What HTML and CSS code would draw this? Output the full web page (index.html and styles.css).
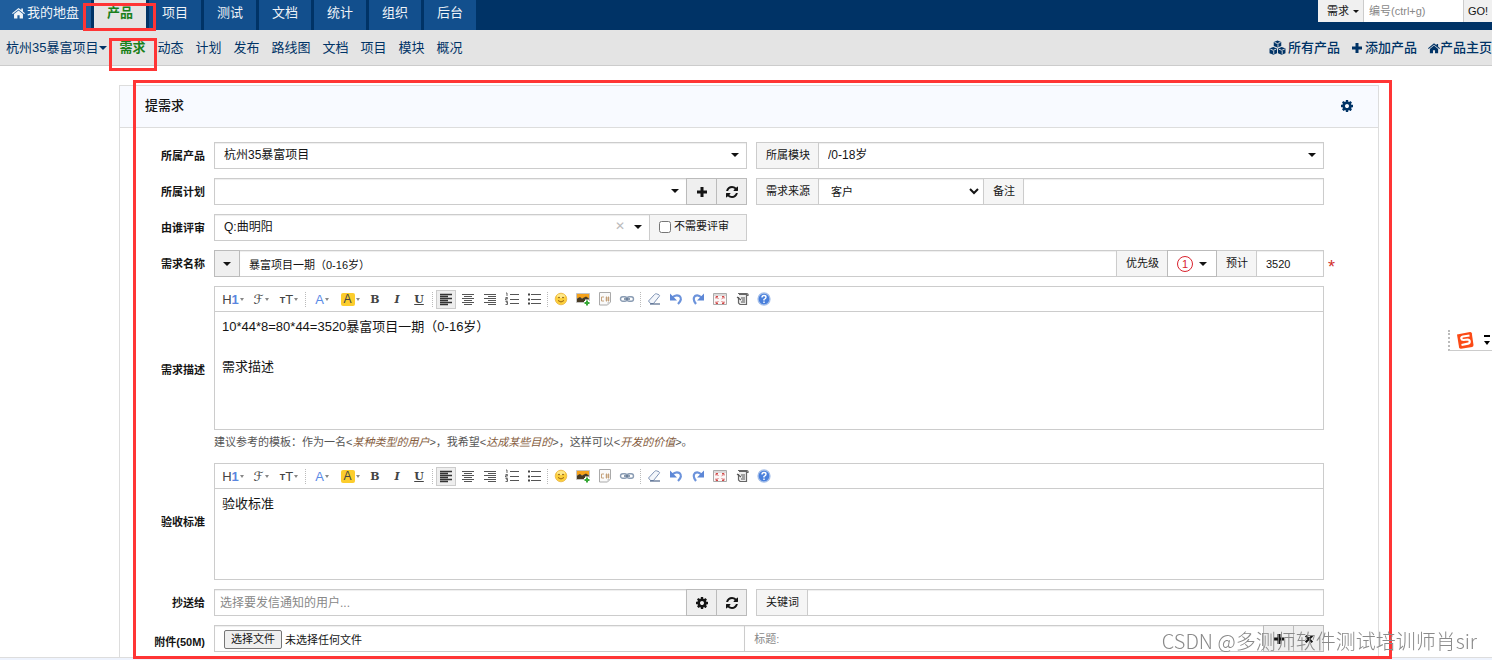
FILE: index.html
```html
<!DOCTYPE html>
<html lang="zh-CN">
<head>
<meta charset="utf-8">
<title>提需求</title>
<link rel="stylesheet" href="styles.css">
</head>
<body>
<svg class="sprite" aria-hidden="true">
  <symbol id="i-home" viewBox="0 0 14 12"><path fill="currentColor" d="M7 .5 0 6.300l.8.9L7 2.200l6.200 5 .8-.9-2.200-1.800V1.200H10v1.700zM7 3.200 2.200 7.100V12h3.600V8.500h2.400V12h3.600V7.100z"/></symbol>
  <symbol id="i-plus" viewBox="0 0 12 12"><path fill="currentColor" d="M4.500 1h3v3.500H11v3H7.500V11h-3V7.500H1v-3h3.500z"/></symbol>
  <symbol id="i-times" viewBox="0 0 12 12"><path fill="none" stroke="currentColor" stroke-width="2.600" d="m2 2 8 8M10 2l-8 8"/></symbol>
  <symbol id="i-cubes" viewBox="0 0 18 16"><path fill="currentColor" d="M9 .5 13 2v4.500L9 8 5 6.500V2zM4.500 7.500l4 1.500v5l-4 1.700-4-1.700V9zM13.500 7.500l4 1.500v5l-4 1.700-4-1.700V9z"/><path fill="none" stroke="#e4e4e4" d="m5.800 2.500 3.200 1.300 3.200-1.300M9.500 4.500v2.700M1.300 9.700l3.200 1.300 3.200-1.300M5 11.800v3M10.300 9.700l3.200 1.300 3.200-1.300M14 11.800v3"/></symbol>
  <symbol id="i-cog" viewBox="0 128 1536 1536"><path fill="currentColor" d="M1024 896q0-106-75-181t-181-75-181 75-75 181 75 181 181 75 181-75 75-181zm512-109v222q0 12-8 23t-20 13l-185 28q-19 54-39 91 35 50 107 138 10 12 10 25t-9 23q-27 37-99 108t-94 71q-12 0-26-9l-138-108q-44 23-91 38-16 136-29 186-7 28-36 28h-222q-14 0-24.500-8.500t-11.500-21.500l-28-184q-49-16-90-37l-141 107q-10 9-25 9-14 0-25-11-126-114-165-168-7-10-7-23 0-12 8-23 15-21 51-66.500t54-70.500q-27-50-41-99l-183-27q-13-2-21-12.500t-8-23.500v-222q0-12 8-23t19-13l186-28q14-46 39-92-40-57-107-138-10-12-10-24 0-10 9-23 26-36 98.500-107.500t94.500-71.500q13 0 26 10l138 107q44-23 91-38 16-136 29-186 7-28 36-28h222q14 0 24.500 8.500t11.500 21.500l28 184q49 16 90 37l142-107q9-9 24-9 13 0 25 10 129 119 165 170 7 8 7 22 0 12-8 23-15 21-51 66.500t-54 70.500q26 50 41 98l183 28q13 2 21 12.500t8 23.500z"/></symbol>
  <symbol id="i-refresh" viewBox="128 128 1536 1536"><path fill="currentColor" d="M1639 1056q0 5-1 7-64 268-268 434.500t-478 166.500q-146 0-282.500-55t-243.500-157l-129 129q-19 19-45 19t-45-19-19-45v-448q0-26 19-45t45-19h448q26 0 45 19t19 45-19 45l-137 137q71 66 161 102t187 36q134 0 250-65t186-179q11-17 53-117 8-23 30-23h192q13 0 22.500 9.500t9.500 22.500zm25-800v448q0 26-19 45t-45 19h-448q-26 0-45-19t-19-45 19-45l138-138q-148-137-349-137-134 0-250 65t-186 179q-11 17-53 117-8 23-30 23h-199q-13 0-22.500-9.500t-9.500-22.500v-7q65-268 270-434.500t480-166.500q146 0 284 55.500t245 156.500l130-129q19-19 45-19t45 19 19 45z"/></symbol>
  <symbol id="i-chevron" viewBox="0 0 10 7"><path fill="none" stroke="currentColor" stroke-width="2" d="m1 1 4 4 4-4"/></symbol>
  <symbol id="t-left" viewBox="0 0 16 16"><path stroke="#333" stroke-width="1.300" d="M2 3.500h12M2 5.500h8M2 7.500h12M2 9.500h8M2 11.500h12M2 13.500h8"/></symbol>
  <symbol id="t-center" viewBox="0 0 16 16"><path stroke="#555" stroke-width="1.200" d="M2 3.500h12M4 5.500h8M2 7.500h12M4 9.500h8M2 11.500h12M4 13.500h8"/></symbol>
  <symbol id="t-right" viewBox="0 0 16 16"><path stroke="#555" stroke-width="1.200" d="M2 3.500h12M6 5.500h8M2 7.500h12M6 9.500h8M2 11.500h12M6 13.500h8"/></symbol>
  <symbol id="t-ol" viewBox="0 0 16 16"><path stroke="#555" stroke-width="1.200" d="M6 3.500h9M6 8.500h9M6 12.500h9"/><path fill="none" stroke="#555" stroke-width=".9" d="M2 2h1v3M1.500 6.500h2v1.200h-2V9h2M1.500 10.500h2v1.200h-1 1V13.500h-2"/></symbol>
  <symbol id="t-ul" viewBox="0 0 16 16"><path stroke="#555" stroke-width="1.200" d="M5 3.500h10M5 8.500h10M5 12.500h10"/><path fill="#444" d="M2 2.500h2v2H2zM2 7.500h2v2H2zM2 11.500h2v2H2z"/></symbol>
  <symbol id="t-smile" viewBox="0 0 16 16"><circle cx="8" cy="8" r="5.800" fill="#fccf3b" stroke="#eab544" stroke-width=".8"/><ellipse cx="8" cy="5" rx="4" ry="2" fill="#ffe98a"/><circle cx="6" cy="6.500" r=".8" fill="#7b4b0a"/><circle cx="10" cy="6.500" r=".8" fill="#7b4b0a"/><path fill="none" stroke="#8b560c" stroke-width=".9" d="M5 9.500q3 3 6 0"/></symbol>
  <symbol id="t-image" viewBox="0 0 16 16"><path fill="#fff" stroke="#aaa" stroke-width=".7" d="M1.500 2.500h13v9h-13z"/><path fill="#f5a21b" d="M2 3h12v4H2z"/><path fill="#473a24" d="M2 7.500 5 6l2 1.500 4-2 3 2V11H2z"/><path stroke="#fff" stroke-width="4" d="M12 8.500V15M9 12h6"/><path stroke="#36a836" stroke-width="2" d="M12 9.500v5M9.500 12h5"/></symbol>
  <symbol id="t-code" viewBox="0 0 16 16"><path fill="#fafafa" stroke="#aaa" d="M2.500 1.500h11v9.500l-3 3h-8z"/><path fill="none" stroke="#c09a70" stroke-width=".9" d="M7 6H4.500v4H7M9.500 5.500v5M11.500 5.500v5M8.500 7h4M8.500 9h4"/><path fill="#ccc" d="M13.500 11h-3v3z"/></symbol>
  <symbol id="t-link" viewBox="0 0 16 16"><rect x="1.500" y="5.700" width="6.500" height="4.600" rx="2.300" fill="none" stroke="#8a9cb3" stroke-width="1.400"/><rect x="8" y="5.700" width="6.500" height="4.600" rx="2.300" fill="none" stroke="#8a9cb3" stroke-width="1.400"/><path stroke="#5f7590" stroke-width="1.400" d="M5 8h6"/></symbol>
  <symbol id="t-eraser" viewBox="0 0 16 16"><path fill="#f3f6fb" stroke="#7e93b5" d="m2.500 10 6-6.500q1-1 2-.7l2.500 1q1 .6.200 1.600L7.500 12.500h-3z"/><path stroke="#53688a" stroke-width="1.200" d="M4 13h10"/></symbol>
  <symbol id="t-undo" viewBox="0 0 16 16"><path fill="none" stroke="#6c93db" stroke-width="2.200" d="M4 6.500q4-3.500 7.500-1.500 3.500 3-1.500 8"/><path fill="#5d87d6" d="M2 2.500v7h7z"/></symbol>
  <symbol id="t-redo" viewBox="0 0 16 16"><path fill="none" stroke="#6c93db" stroke-width="2.200" d="M11.500 6.500Q8 3 5 5q-3 3 1 8"/><path fill="#5d87d6" d="M14 2.500v7H7z"/></symbol>
  <symbol id="t-full" viewBox="0 0 16 16"><path fill="#fbf7f7" stroke="#aaa" d="M1.500 2.500h13v11h-13z"/><path stroke="#bbb" d="M2 4h12"/><path fill="none" stroke="#d14848" stroke-width="1" d="M4 7.500v-2h2M10 5.500h2v2M4 10.500v2h2M10 12.500h2v-2M4.500 6l1.800 1.800M11.500 6 9.700 7.800M4.500 12l1.800-1.800M11.500 12l-1.800-1.800"/></symbol>
  <symbol id="t-source" viewBox="0 0 16 16"><path fill="#eee" stroke="#666" stroke-width="1.200" d="M5 3.500h7.500v10H6L4.500 12V6M4 2.500h8.500q2 0 1.500 2h-2"/><path stroke="#555" stroke-width="1.100" d="m3 6 4 3M7 7h4M8 9h3M7 11h4"/></symbol>
  <symbol id="t-help" viewBox="0 0 16 16"><circle cx="8" cy="8" r="6" fill="#4a80dc" stroke="#a5bfe9" stroke-width="1.300"/><path fill="none" stroke="#fff" stroke-width="1.400" d="M6 6.500q0-2 2-2t2 1.700Q10 7.300 8 8.500v1M8 10.500V12"/></symbol>
</svg>

<header class="topbar">
  <nav class="mainnav" aria-label="主导航">
    <a class="mainnav-item mainnav-home" href="#"><svg class="icon-home"><use href="#i-home"/></svg>我的地盘</a>
    <a class="mainnav-item is-active" href="#">产品<span class="mark mark-main"></span></a>
    <a class="mainnav-item" href="#">项目</a>
    <a class="mainnav-item" href="#">测试</a>
    <a class="mainnav-item" href="#">文档</a>
    <a class="mainnav-item" href="#">统计</a>
    <a class="mainnav-item" href="#">组织</a>
    <a class="mainnav-item" href="#">后台</a>
  </nav>
  <form class="search">
    <button class="search-type" type="button">需求<span class="caret caret-small"></span></button>
    <input class="search-input" type="text" placeholder="编号(ctrl+g)" aria-label="编号">
    <button class="search-go" type="button">GO!</button>
  </form>
</header>

<div class="subbar">
  <nav class="subnav" aria-label="产品导航">
    <a class="subnav-product" href="#">杭州35暴富项目<span class="caret"></span></a>
    <a class="is-current" href="#">需求<span class="mark mark-sub"></span></a>
    <a href="#">动态</a>
    <a href="#">计划</a>
    <a href="#">发布</a>
    <a href="#">路线图</a>
    <a href="#">文档</a>
    <a href="#">项目</a>
    <a href="#">模块</a>
    <a href="#">概况</a>
  </nav>
  <div class="subactions">
    <a href="#"><svg class="icon-cubes"><use href="#i-cubes"/></svg>所有产品</a>
    <a href="#"><svg class="icon-md"><use href="#i-plus"/></svg>添加产品</a>
    <a class="tight" href="#"><svg class="icon-md"><use href="#i-home"/></svg>产品主页</a>
  </div>
</div>

<main class="page">
  <section class="panel">
    <div class="panel-head">
      <h1>提需求</h1>
      <button class="panel-cog" type="button" aria-label="设置"><svg class="icon-md"><use href="#i-cog"/></svg></button>
    </div>
    <form class="form">
      <label class="form-label" for="product">所属产品</label>
      <div class="cols">
        <div class="group">
          <div class="select grow"><select id="product"><option>杭州35暴富项目</option></select></div>
        </div>
        <div class="group">
          <label class="addon" for="module">所属模块</label>
          <div class="select grow"><select id="module"><option>/0-18岁</option></select></div>
        </div>
      </div>

      <label class="form-label" for="plan">所属计划</label>
      <div class="cols">
        <div class="group">
          <div class="select grow"><select id="plan"><option></option></select></div>
          <button class="btn" type="button" aria-label="添加计划"><svg class="icon-md"><use href="#i-plus"/></svg></button>
          <button class="btn" type="button" aria-label="刷新计划"><svg class="icon-md"><use href="#i-refresh"/></svg></button>
        </div>
        <div class="group">
          <label class="addon" for="source">需求来源</label>
          <div class="select select-native"><select id="source"><option>客户</option></select><svg class="chevron"><use href="#i-chevron"/></svg></div>
          <label class="addon" for="note">备注</label>
          <input class="input grow" id="note" type="text">
        </div>
      </div>

      <label class="form-label" for="reviewer">由谁评审</label>
      <div class="cols">
        <div class="group">
          <div class="select grow"><select id="reviewer"><option>Q:曲明阳</option></select><button class="clear" type="button" aria-label="清除">✕</button></div>
          <label class="addon addon-check"><input type="checkbox">不需要评审</label>
        </div>
      </div>

      <label class="form-label" for="title">需求名称</label>
      <div class="group">
        <button class="btn btn-color" type="button" aria-label="颜色"><span class="caret"></span></button>
        <input class="input input-title grow" id="title" type="text" value="暴富项目一期（0-16岁）">
        <span class="addon">优先级</span>
        <button class="btn btn-pri" type="button"><span class="pri">1</span><span class="caret"></span></button>
        <label class="addon" for="estimate">预计</label>
        <input class="input input-estimate" id="estimate" type="text" value="3520">
      </div>
      <span class="required">*</span>

      <label class="form-label" for="spec">需求描述</label>
      <div class="field">
        <div class="editor">
          <div class="toolbar">
            <button type="button" class="wide tx-h">H<b>1</b></button><button type="button" class="wide tx-f">ℱ</button><button type="button" class="wide tx-t"><small>T</small>T</button><i class="sep"></i>
            <button type="button" class="wide tx-a">A</button><button type="button" class="wide tx-bg"><span>A</span></button>
            <button type="button" class="tx-b">B</button><button type="button" class="tx-i">I</button><button type="button" class="tx-u">U</button><i class="sep"></i>
            <button type="button" class="is-on"><svg><use href="#t-left"/></svg></button><button type="button"><svg><use href="#t-center"/></svg></button><button type="button"><svg><use href="#t-right"/></svg></button><button type="button"><svg><use href="#t-ol"/></svg></button><button type="button"><svg><use href="#t-ul"/></svg></button><i class="sep"></i>
            <button type="button"><svg><use href="#t-smile"/></svg></button><button type="button"><svg><use href="#t-image"/></svg></button><button type="button"><svg><use href="#t-code"/></svg></button><button type="button"><svg><use href="#t-link"/></svg></button><i class="sep"></i>
            <button type="button"><svg><use href="#t-eraser"/></svg></button><button type="button"><svg><use href="#t-undo"/></svg></button><button type="button"><svg><use href="#t-redo"/></svg></button><button type="button"><svg><use href="#t-full"/></svg></button><button type="button"><svg><use href="#t-source"/></svg></button><button type="button"><svg><use href="#t-help"/></svg></button>
          </div>
          <textarea class="editor-text editor-tall" id="spec">10*44*8=80*44=3520暴富项目一期（0-16岁）

需求描述</textarea>
        </div>
        <p class="hint">建议参考的模板：作为一名&lt;<em>某种类型的用户</em>&gt;，我希望&lt;<em>达成某些目的</em>&gt;，这样可以&lt;<em>开发的价值</em>&gt;。</p>
      </div>

      <label class="form-label" for="verify">验收标准</label>
      <div class="field">
        <div class="editor">
          <div class="toolbar">
            <button type="button" class="wide tx-h">H<b>1</b></button><button type="button" class="wide tx-f">ℱ</button><button type="button" class="wide tx-t"><small>T</small>T</button><i class="sep"></i>
            <button type="button" class="wide tx-a">A</button><button type="button" class="wide tx-bg"><span>A</span></button>
            <button type="button" class="tx-b">B</button><button type="button" class="tx-i">I</button><button type="button" class="tx-u">U</button><i class="sep"></i>
            <button type="button" class="is-on"><svg><use href="#t-left"/></svg></button><button type="button"><svg><use href="#t-center"/></svg></button><button type="button"><svg><use href="#t-right"/></svg></button><button type="button"><svg><use href="#t-ol"/></svg></button><button type="button"><svg><use href="#t-ul"/></svg></button><i class="sep"></i>
            <button type="button"><svg><use href="#t-smile"/></svg></button><button type="button"><svg><use href="#t-image"/></svg></button><button type="button"><svg><use href="#t-code"/></svg></button><button type="button"><svg><use href="#t-link"/></svg></button><i class="sep"></i>
            <button type="button"><svg><use href="#t-eraser"/></svg></button><button type="button"><svg><use href="#t-undo"/></svg></button><button type="button"><svg><use href="#t-redo"/></svg></button><button type="button"><svg><use href="#t-full"/></svg></button><button type="button"><svg><use href="#t-source"/></svg></button><button type="button"><svg><use href="#t-help"/></svg></button>
          </div>
          <textarea class="editor-text editor-short" id="verify">验收标准</textarea>
        </div>
      </div>

      <label class="form-label" for="mailto">抄送给</label>
      <div class="cols">
        <div class="group">
          <input class="input input-mail grow" id="mailto" type="text" placeholder="选择要发信通知的用户...">
          <button class="btn" type="button" aria-label="管理联系人"><svg class="icon-md"><use href="#i-cog"/></svg></button>
          <button class="btn" type="button" aria-label="刷新"><svg class="icon-md"><use href="#i-refresh"/></svg></button>
        </div>
        <div class="group">
          <label class="addon" for="keywords">关键词</label>
          <input class="input grow" id="keywords" type="text">
        </div>
      </div>

      <label class="form-label form-label-file" for="file">附件(50M)</label>
      <div class="group">
        <div class="filebox">
          <input class="file-native" id="file" type="file">
          <label class="file-btn" for="file">选择文件</label>
          <span>未选择任何文件</span>
        </div>
        <input class="input file-title" type="text" placeholder="标题:" aria-label="标题">
        <button class="btn" type="button" aria-label="添加附件"><svg class="icon-md"><use href="#i-plus"/></svg></button>
        <button class="btn" type="button" aria-label="删除附件"><svg class="icon-sm"><use href="#i-times"/></svg></button>
      </div>
    </form>
    <span class="mark mark-form"></span>
  </section>
</main>
<footer class="footer"></footer>

<aside class="ime" aria-label="输入法">
  <svg class="ime-logo" viewBox="0 0 18 18"><path fill="#fb4a16" d="m1 3.500 13-2.500q1.500 0 1.800 1.200L17.500 14q0 1.500-1.300 1.900L5 17.800q-1.500 0-1.900-1.300z"/><path fill="none" stroke="#fff" stroke-width="2.200" d="M13.500 4.500 7 5.500q-2 .5-1.700 2T7.500 9l4-.5q2 0 2.200 1.800t-1.700 2.400l-6.500 1.300"/></svg>
  <svg class="ime-menu" viewBox="0 0 6 12"><path fill="#000" d="M0 1h6v2H0zM0 7h6l-3 4z"/></svg>
</aside>
<div class="watermark">CSDN @多测师软件测试培训师肖sir</div>
</body>
</html>
```
FILE: styles.css
```css
* { box-sizing: border-box; }

body {
  margin: 0;
  min-height: 100vh;
  display: flex;
  flex-direction: column;
  position: relative;
  overflow-x: hidden;
  background: #fff;
  color: #141414;
  font: 13px/20px "Liberation Sans", "Noto Sans CJK SC", sans-serif;
}

a { color: inherit; text-decoration: none; }
button, input, select, textarea { font: inherit; color: inherit; margin: 0; border-radius: 0; }
button { cursor: pointer; }
.sprite { position: absolute; width: 0; height: 0; }

.icon-home { width: 13px; height: 12px; margin-right: 2px; }
.icon-md { width: 12px; height: 12px; }
.icon-sm { width: 10px; height: 10px; }
.icon-cubes { width: 17px; height: 15px; }

.caret {
  display: inline-block;
  border: 4px solid transparent;
  border-top-color: currentColor;
  border-bottom: 0;
}
.caret-small { border-width: 3px; border-bottom: 0; }

/* Red frames drawn over the highlighted areas */
.mark { position: absolute; border: 3px solid #ff3535; pointer-events: none; z-index: 3; }
.mark-main { inset: 3px -10px -1px -11px; }
.mark-sub { inset: 0 -12px -14px -10px; }
.mark-form { inset: -6px -14px -2px 13px; }

/* Top navigation */
.topbar { display: flex; justify-content: space-between; align-items: flex-start; background: #036; }
.mainnav { display: flex; gap: 3px; }
.mainnav-item {
  position: relative;
  display: flex;
  align-items: center;
  padding: 0 13px 4px;
  background: #124f8d;
  color: #f0f4f8;
  line-height: 26px;
}
.mainnav-home { padding: 0 12px 4px; background: #1f5e9d; }
.mainnav-item.is-active { background: #e4e4e4; color: #1a801a; font-weight: 700; }

.search { display: flex; font-size: 11px; line-height: 22px; }
.search button { border: 0; background: #f0f0f0; padding: 0; height: 22px; }
.search .search-type { display: flex; align-items: center; gap: 4px; padding: 0 4px 0 9px; }
.search-input { width: 101px; height: 22px; border: solid #ccc; border-width: 0 1px; padding: 0 5px; background: #fff; }
.search .search-go { width: 28px; }
::placeholder { color: #888; opacity: 1; }

/* Second navigation */
.subbar {
  display: flex;
  justify-content: space-between;
  padding: 8px 0;
  background: #e4e4e4;
  border-bottom: 1px solid #ccc;
  color: #036;
}
.subnav { display: flex; gap: 12px; padding-left: 6px; }
.subnav a { position: relative; line-height: 19px; }
.subnav .subnav-product { display: flex; align-items: center; gap: 1px; }
.subnav .is-current { color: #1a801a; font-weight: 700; }
.subactions { display: flex; gap: 11px; font-weight: 500; }
.subactions a { display: flex; align-items: center; gap: 2px; line-height: 19px; }
.subactions .tight { gap: 0; }

/* Panel */
.page { flex: 1; display: flex; padding: 19px 113px 0 119px; }
.panel { position: relative; flex: 1; min-width: 0; border: 1px solid #ddd; border-bottom: 0; }
.panel-head {
  display: flex;
  justify-content: space-between;
  align-items: center;
  padding: 10px 24px 11px 25px;
  background: #f8faff;
  border-bottom: 1px solid #ddd;
}
.panel-head h1 { margin: 0; font-size: 13px; font-weight: 500; line-height: 20px; }
.panel-cog { display: flex; padding: 0; margin-right: 1px; border: 0; background: none; color: #036; }

/* Form */
.form {
  display: grid;
  grid-template-columns: 85px minmax(0, 1fr) 45px;
  gap: 9px;
  align-items: center;
  padding-top: 14px;
  font-size: 11px;
}
.form-label { grid-column: 1; font-weight: 700; text-align: right; }
.form-label-file { padding-top: 7px; }
.cols, .form > .group, .field { grid-column: 2; }
.cols { display: grid; grid-template-columns: 533fr 568fr; gap: 9px; }
.group { display: flex; min-width: 0; }
.group > * + * { margin-left: -1px; }
.grow { flex: 1; min-width: 0; }
.input, .select select {
  height: 27px;
  padding: 0 9px;
  border: 1px solid #ccc;
  background: #fff;
  box-shadow: inset 0 1px 1px #eee;
}
.select { position: relative; display: flex; }
.select select { width: 100%; padding: 0 9px 2px; font-size: 12px; appearance: none; }
.select::after {
  content: "";
  position: absolute;
  right: 8px;
  top: 11px;
  border: 4px solid transparent;
  border-top-color: #111;
  border-bottom: 0;
  pointer-events: none;
}
.select-native { width: 166px; }
.select-native select { padding: 0 12px; font-size: 11px; }
.select-native::after { content: none; }
.chevron { position: absolute; right: 5px; top: 10px; width: 10px; height: 7px; pointer-events: none; }
.clear {
  position: absolute;
  right: 25px;
  top: 3px;
  border: 0;
  padding: 0;
  background: none;
  color: #bbb;
  font: 12px/18px "DejaVu Sans", sans-serif;
}
.addon { padding: 0 8px 0 9px; border: 1px solid #ccc; background: #f5f5f5; line-height: 25px; white-space: nowrap; }
.addon-check { display: flex; align-items: center; gap: 3px; width: 98px; padding-bottom: 2px; line-height: 23px; }
.addon-check input { width: 12px; height: 12px; }
.btn {
  position: relative;
  display: flex;
  align-items: center;
  justify-content: center;
  width: 31px;
  height: 27px;
  padding: 0;
  border: 1px solid #bbb;
  background: #efefef;
}
.btn-color { width: 26px; }
.btn-pri { width: 50px; gap: 6px; background: #fff; }
.pri { width: 16px; border: 1px solid #d9232e; border-radius: 50%; color: #d9232e; line-height: 14px; }
.input-estimate { width: 68px; }
.input-mail { padding: 0 5px; font-size: 12px; }
.required { margin-left: -5px; color: #d2322d; font-size: 18px; line-height: 18px; padding-top: 6px; }

/* Rich text editor */
.editor { border: 1px solid #ccc; }
.toolbar { display: flex; align-items: center; height: 25px; padding-left: 4px; border-bottom: 1px solid #ccc; }
.toolbar button {
  display: flex;
  align-items: center;
  justify-content: center;
  width: 22px;
  height: 19px;
  padding: 0;
  border: 0;
  background: none;
  color: #444;
  font-size: 13px;
  line-height: 17px;
}
.toolbar svg { width: 16px; height: 16px; }
.toolbar .wide { width: 28px; }
.toolbar .wide::after { content: ""; border: 2px solid transparent; border-top: 3px solid #888; border-bottom: 0; margin-left: 1px; }
.toolbar .is-on { width: 20px; margin: 0 1px; border: 1px solid #ccc; background: #eee; }
.sep { width: 0; height: 15px; margin: 0 2px; border-left: 1px dotted #bbb; }
.tx-h b { color: #5a86e0; }
.toolbar .tx-f { font-family: "DejaVu Sans", sans-serif; }
.tx-t small { font-size: 9px; font-weight: 700; padding-top: 2px; }
.toolbar .tx-a { color: #5a8ae6; }
.tx-bg span { width: 14px; height: 13px; border-radius: 2px; background: #fccd2d; color: #444; font-size: 12px; line-height: 13px; }
.toolbar .tx-b, .toolbar .tx-i, .toolbar .tx-u { font: bold 11px/17px "DejaVu Serif", serif; }
.toolbar .tx-i { font-style: italic; }
.toolbar .tx-u { text-decoration: underline; }
.editor-text {
  display: block;
  width: 100%;
  padding: 5px 7px;
  border: 0;
  outline: 0;
  resize: none;
  overflow: hidden;
  background: #fff;
  font-size: 13px;
  line-height: 20px;
}
.editor-tall { height: 117px; }
.editor-short { height: 90px; }
.hint { margin: 0; color: #555; line-height: 24px; }
.hint em { color: #855c3d; }

/* Attachment row */
.filebox {
  flex: 533;
  display: flex;
  align-items: center;
  gap: 3px;
  height: 27px;
  padding: 2px 9px 0;
  border: 1px solid #ccc;
  box-shadow: inset 0 1px 1px #eee;
}
.file-native { position: absolute; width: 1px; height: 1px; opacity: 0; }
.file-btn { padding: 0 6px; border: 1px solid #767676; border-radius: 2px; background: #efefef; line-height: 17px; }
.file-title { flex: 521; min-width: 0; }

.footer { height: 3px; background: #eef3fd; border-top: 1px solid #ddd; }

/* Input method widget and watermark float over the page */
.ime {
  position: fixed;
  right: 0;
  top: 330px;
  display: flex;
  align-items: center;
  gap: 10px;
  padding: 1px 2px 1px 6px;
  border-left: 2px dotted #bbb;
  border-bottom: 1px solid #ccc;
  background: #fff;
}
.ime-logo { width: 18px; height: 18px; }
.ime-menu { width: 6px; height: 12px; }
.watermark {
  position: fixed;
  right: 15px;
  bottom: 4px;
  z-index: 4;
  color: #8a8a8a;
  font: 300 20px/30px "Noto Sans CJK SC", sans-serif;
  pointer-events: none;
}
```
